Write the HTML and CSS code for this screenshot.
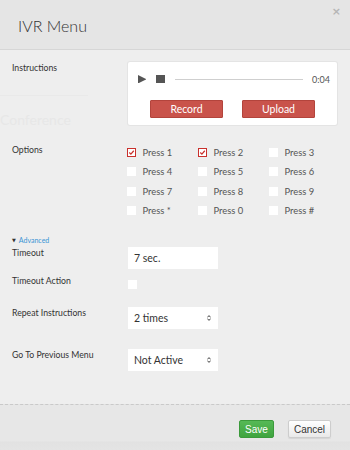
FILE: index.html
```html
<!DOCTYPE html>
<html lang="en">
<head>
    <meta charset="UTF-8">
    <meta name="viewport" content="width=device-width, initial-scale=1.0">
    <title>IVR Menu</title>
    <link rel="stylesheet" href="styles.css">
</head>
<body>

    <div class="modal">
        <!-- Header -->
        <div class="modal-header">
            <h1 class="modal-title">IVR Menu</h1>
            <span class="close">&times;</span>
        </div>

        <!-- Body -->
        <div class="modal-body">
            <div class="ghost">Conference</div>

            <div class="row">
                <div class="label">Instructions</div>
                <div class="player-card">
                    <div class="player">
                        <svg class="play" viewBox="0 0 9 9"><path d="M0 0 L9 4.5 L0 9 Z" fill="#555"/></svg>
                        <span class="stop"></span>
                        <span class="progress"></span>
                        <span class="time">0:04</span>
                    </div>
                    <div class="player-actions">
                        <button class="btn-red">Record</button>
                        <button class="btn-red">Upload</button>
                    </div>
                </div>
            </div>

            <div class="row row-options">
                <div class="label label-options">Options</div>
                <div class="options-grid">
                    <label class="option"><span class="check checked"><svg viewBox="0 0 8 8"><path d="M1.5 4 L3.3 5.8 L6.6 2" fill="none" stroke="#c9302c" stroke-width="1.4"/></svg></span>Press 1</label>
                    <label class="option"><span class="check checked"><svg viewBox="0 0 8 8"><path d="M1.5 4 L3.3 5.8 L6.6 2" fill="none" stroke="#c9302c" stroke-width="1.4"/></svg></span>Press 2</label>
                    <label class="option"><span class="check"></span>Press 3</label>
                    <label class="option"><span class="check"></span>Press 4</label>
                    <label class="option"><span class="check"></span>Press 5</label>
                    <label class="option"><span class="check"></span>Press 6</label>
                    <label class="option"><span class="check"></span>Press 7</label>
                    <label class="option"><span class="check"></span>Press 8</label>
                    <label class="option"><span class="check"></span>Press 9</label>
                    <label class="option"><span class="check"></span>Press *</label>
                    <label class="option"><span class="check"></span>Press 0</label>
                    <label class="option"><span class="check"></span>Press #</label>
                </div>
            </div>

            <!-- Advanced -->
            <div class="advanced"><span class="caret">&#9660;</span>Advanced</div>

            <div class="row row-timeout">
                <div class="label">Timeout</div>
                <div class="input">7 sec.</div>
            </div>

            <div class="row row-action">
                <div class="label">Timeout Action</div>
                <span class="check check-action"></span>
            </div>

            <div class="row row-repeat">
                <div class="label">Repeat Instructions</div>
                <div class="select">
                    <span>2 times</span>
                    <svg class="arrows" viewBox="0 0 4 6"><path d="M0.4 2.4 L2 0.6 L3.6 2.4 M0.4 3.6 L2 5.4 L3.6 3.6" fill="none" stroke="#444" stroke-width="1"/></svg>
                </div>
            </div>

            <div class="row row-previous">
                <div class="label">Go To Previous Menu</div>
                <div class="select">
                    <span>Not Active</span>
                    <svg class="arrows" viewBox="0 0 4 6"><path d="M0.4 2.4 L2 0.6 L3.6 2.4 M0.4 3.6 L2 5.4 L3.6 3.6" fill="none" stroke="#444" stroke-width="1"/></svg>
                </div>
            </div>
        </div>

        <!-- Footer -->
        <div class="modal-footer">
            <button class="btn-save">Save</button>
            <button class="btn-cancel">Cancel</button>
        </div>
    </div>

</body>
</html>
```

FILE: styles.css
```css
/* Page */
body {
    margin: 0;
    font-family: Lato, "Open Sans", sans-serif;
    color: #333;
}

.modal {
    width: 350px;
    height: 450px;
    display: flex;
    flex-direction: column;
    background-color: #eeeeee;
}

/* Header */
.modal-header {
    position: relative;
    height: 49px;
    flex-shrink: 0;
    display: flex;
    align-items: center;
    padding-left: 18px;
    background-color: #e5e5e5;
    border-bottom: 1px solid #d6d6d6;
}
.modal-title {
    margin: 0;
    font-size: 16px;
    font-weight: 300;
    color: #333;
    padding-top: 1px;
}
.close {
    position: absolute;
    top: 5px;
    right: 9px;
    font-family: "DejaVu Sans", sans-serif;
    font-size: 11px;
    font-weight: bold;
    color: #b5b5b5;
}

/* Body */
.modal-body {
    position: relative;
    flex: 1;
    padding: 12px 0 0 12px;
    background-color: #eeeeee;
}
.ghost {
    position: absolute;
    left: 0;
    top: 45px;
    width: 88px;
    padding-top: 15px;
    font-size: 14px;
    line-height: 17px;
    color: #e7e7e7;
    border-top: 1px solid #e9e9e9;
}

.row {
    position: relative;
    display: flex;
    align-items: flex-start;
}
.label {
    width: 116px;
    flex-shrink: 0;
    font-size: 8.7px;
    line-height: 12px;
    color: #333;
}

/* Player card */
.player-card {
    width: 209px;
    height: 63px;
    box-sizing: border-box;
    padding: 13px 7px 0 10px;
    background-color: #fff;
    border-radius: 2px;
    box-shadow: 0 0 0 1px #e4e4e4;
}
.player {
    height: 8px;
    display: flex;
    align-items: center;
}
.play {
    width: 8.5px;
    height: 8.5px;
}
.stop {
    width: 9px;
    height: 8.5px;
    margin-left: 10px;
    background-color: #555;
}
.progress {
    width: 129px;
    height: 1px;
    margin-left: 10px;
    background-color: #cfcfcf;
}
.time {
    margin-left: 9px;
    font-size: 9px;
    color: #555;
}
.player-actions {
    display: flex;
    justify-content: center;
    gap: 19px;
    margin-top: 17px;
    margin-left: -3px;
}
.btn-red {
    width: 73px;
    height: 18px;
    padding: 0;
    font-family: Lato, sans-serif;
    font-size: 10.5px;
    color: #fff;
    background-color: #c9534b;
    border: 1px solid #b3443c;
    border-radius: 1px;
}

/* Options */
.row-options {
    margin-top: 18px;
}
.label-options {
    margin-top: 1px;
    width: 115px;
}
.options-grid {
    display: grid;
    grid-template-columns: 71px 71px auto;
    grid-auto-rows: 19.3px;
}
.option {
    display: flex;
    align-items: center;
    font-size: 9.4px;
    color: #555;
}
.check {
    width: 9px;
    height: 9px;
    margin-right: 6.5px;
    background-color: #fff;
    box-sizing: border-box;
    display: flex;
}
.check.checked {
    border: 1px solid #c9302c;
}
.check svg {
    width: 100%;
    height: 100%;
}

/* Advanced */
.advanced {
    margin-top: 15px;
    font-size: 7px;
    line-height: 10px;
    color: #3a95d5;
}
.caret {
    font-family: "DejaVu Sans", sans-serif;
    font-size: 5px;
    color: #333;
    margin-right: 3px;
    vertical-align: 1px;
}

/* Form controls */
.row-timeout {
    margin-top: 2px;
}
.input,
.select {
    width: 90px;
    height: 22px;
    box-sizing: border-box;
    padding: 0 7px 0 6px;
    display: flex;
    align-items: center;
    justify-content: space-between;
    background-color: #fff;
    font-size: 10.5px;
    color: #333;
}
.row-action {
    margin-top: 6px;
}
.check-action {
    margin-top: 5px;
}
.row-repeat {
    margin-top: 18px;
}
.row-previous {
    margin-top: 20px;
}
.arrows {
    width: 4px;
    height: 6px;
}

/* Footer */
.modal-footer {
    height: 46px;
    flex-shrink: 0;
    display: flex;
    justify-content: flex-end;
    align-items: flex-start;
    gap: 14px;
    padding: 15px 19px 0 0;
    box-sizing: border-box;
    border-top: 1px dashed #c9c9c9;
    background: linear-gradient(#e7e7e7, #e7e7e7 80%, #e2e2e2 82%, #e4e4e4);
}
.btn-save,
.btn-cancel {
    height: 18px;
    padding: 0;
    font-family: "Liberation Sans", Arial, sans-serif;
    font-size: 10px;
    border-radius: 2px;
}
.btn-save {
    width: 35px;
    color: #fff;
    background: linear-gradient(#56b956, #3fa43f);
    border: 1px solid #3b9a3b;
}
.btn-cancel {
    width: 43px;
    color: #333;
    background: linear-gradient(#ffffff, #e9e9e9);
    border: 1px solid #cdcdcd;
    box-shadow: 0 1px 1px rgba(0, 0, 0, 0.08);
}
```
